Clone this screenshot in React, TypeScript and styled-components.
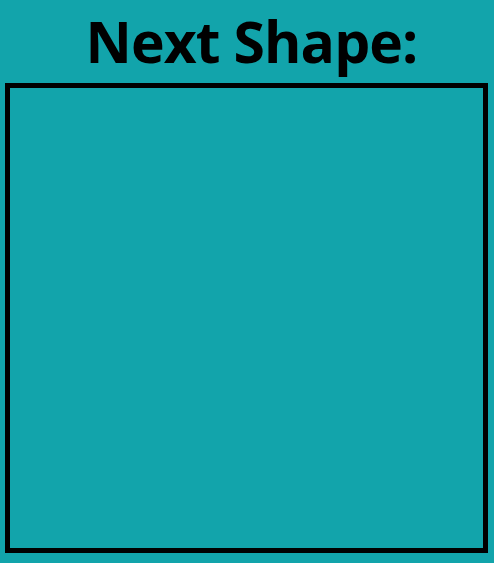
import React from "react";
import styled, { createGlobalStyle } from "styled-components";

const Global = createGlobalStyle`
  html, body {
    margin: 0;
    padding: 0;
    background: #12a4ab;
  }
  body {
    width: 494px;
    height: 563px;
    overflow: hidden;
  }
`;

const Panel = styled.div`
  width: 494px;
  height: 563px;
  box-sizing: border-box;
  display: flex;
  flex-direction: column;
  align-items: stretch;
  padding: 0 6px 10px 5px;
  background: #12a4ab;
`;

const Title = styled.h1`
  margin: 0;
  box-sizing: border-box;
  height: 83px;
  padding: 0 0 3px 10px;
  display: flex;
  align-items: flex-end;
  justify-content: center;
  font-family: "Open Sans", "Noto Sans", sans-serif;
  font-weight: 700;
  font-size: 57px;
  line-height: 78px;
  color: #000;
  letter-spacing: -0.9px;
`;

const Preview = styled.div`
  flex: 1;
  box-sizing: border-box;
  border: 5px solid #000;
  background: #12a4ab;
`;

export default function App() {
  return (
    <>
      <Global />
      <Panel>
        <Title>Next Shape:</Title>
        <Preview />
      </Panel>
    </>
  );
}
